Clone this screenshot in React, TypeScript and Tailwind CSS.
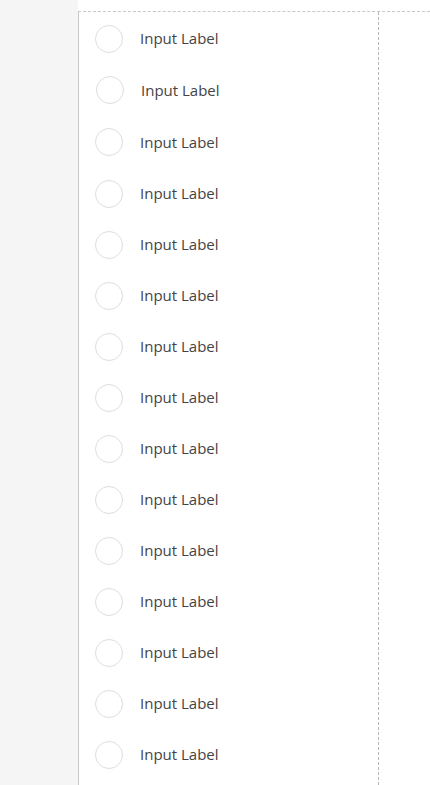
const rows = Array.from({ length: 15 }, (_, i) => i);

export default function App() {
  return (
    <div className="flex h-[785px] w-[430px] overflow-hidden bg-white font-['Open_Sans',sans-serif]">
      <div className="w-[78px] shrink-0 bg-[#f5f5f5]" />
      <div className="flex-1 pt-[11px]">
        <div className="h-full border-t border-dashed border-[#c8c8c8]">
          <div
            className="h-full w-[301px] border-l border-r border-l-[#c8c8c8] border-r-[#b4b4b4] pt-[1px]"
            style={{ borderRightStyle: "dashed" }}
          >
            {rows.map((i) => (
              <label
                key={i}
                className={`flex items-center gap-[17px] pl-[16px] ${i === 1 || i === 2 ? "h-[52px]" : "h-[51px]"} ${i === 1 ? "ml-[1px]" : ""}`}
              >
                <span className="h-[28px] w-[28px] rounded-full border border-[#dedede] bg-white" />
                <span className="text-[15px] text-[#444]">Input Label</span>
              </label>
            ))}
          </div>
        </div>
      </div>
    </div>
  );
}
